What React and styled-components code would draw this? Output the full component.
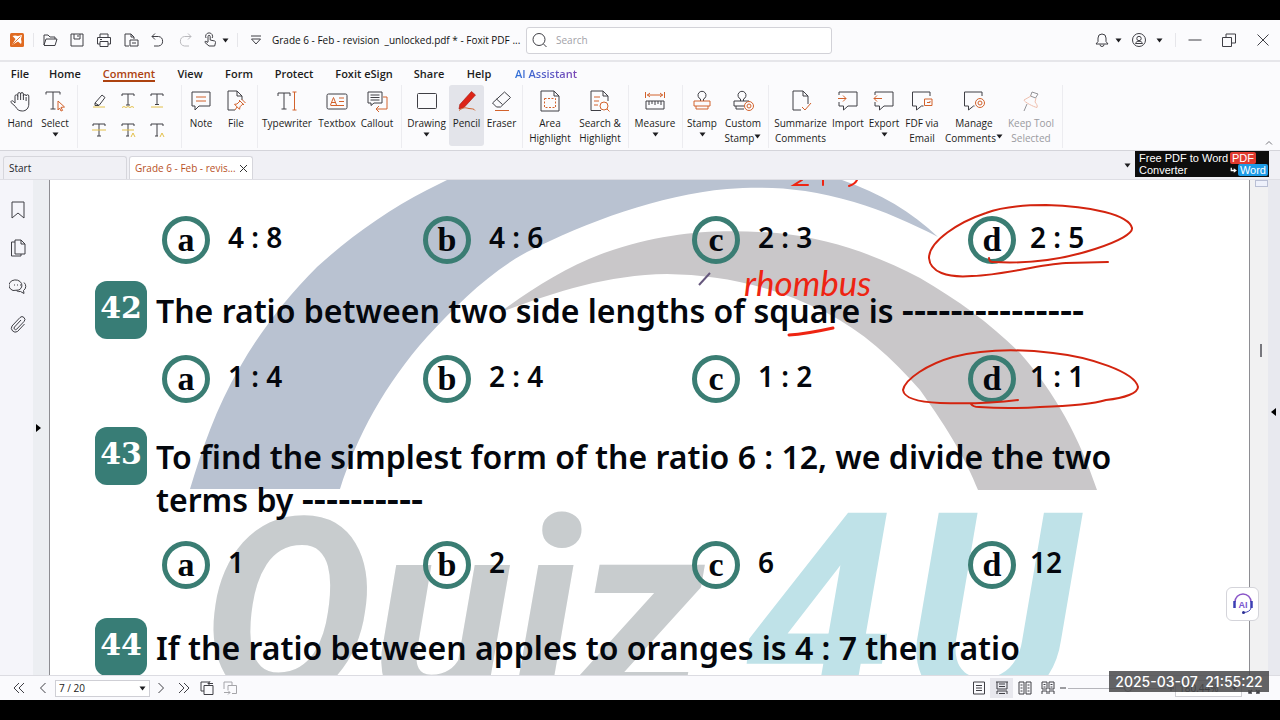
import React, { useState } from "react";
import styled, { createGlobalStyle, css } from "styled-components";

const UI = `"Open Sans", "Noto Sans", sans-serif`;
const INK = "#3f3f45";
const ORANGE = "#d2622c";
const GOLD = "#e3c04a";

const o = { stroke: ORANGE };
const g = { stroke: GOLD };

// ribbon icons, 22 x 22
const icons = {
  hand: (
    <path d="M6 13V6.2a1.4 1.4 0 0 1 2.8 0V4a1.4 1.4 0 0 1 2.8 0v0a1.4 1.4 0 0 1 2.8 0v2a1.4 1.4 0 0 1 2.8 0v0a1.3 1.3 0 0 1 2.6 0V14c0 4-2.5 7-6.5 7-3.6 0-5.2-1.6-6.8-4.4L2 12.5c-.5-1.5 1.2-2.4 2.3-1.2L6 13M8.800 6v4M11.600 4v6M14.400 5v5M17.100 7v4" />
  ),
  select: (
    <>
      <path d="M2 4.500V2h14v2.500M9 2v17M6.500 19h5" />
      <path {...o} d="M14 11l6.500 6-3.500.4 1.600 3-1.600.6-1.400-3L14 20z" />
    </>
  ),
  note: (
    <>
      <path d="M2 2h18v14H9l-4 4v-4H2z" />
      <path {...o} d="M6 7h10M6 11h10" />
    </>
  ),
  file: (
    <>
      <path d="M10 20H3V1h9l5 5v4M12 1v5h5" />
      <path {...o} d="M14 10l5 5M15 11l-3 3-2.500.3 5 5 .5-2.500 3-3M12 17l-2 3M17 9.500l3.500 3.500" />
    </>
  ),
  typewriter: (
    <>
      <path d="M2 6V3h12v3M8 3v16M5.500 19h5" />
      <path {...o} d="M16.500 2h4M18.500 2v18M16.500 20h4" />
    </>
  ),
  textbox: (
    <>
      <rect x="1" y="4" width="20" height="15" rx="1.5" />
      <path {...o} d="M4.500 15l3-7.500 3 7.500M5.500 12.500h4M13 8h5M13 11.500h5M4.500 15.500h13.500" />
    </>
  ),
  callout: (
    <>
      <path d="M2 2h14v11H8l-3 2.500V13H2zM4.500 5h9M4.500 7.500h9M4.500 10h9" />
      <path {...o} d="M17 7h4v12H10M13 16l-3 3 3 3" />
    </>
  ),
  drawing: <rect x="1.5" y="3.500" width="19" height="15" rx="1" />,
  pencil: (
    <>
      <path fill="#dd2417" stroke="#a3160d" strokeWidth=".6" d="M15.500 1.500l4 3.500L8 17.500l-5 1.500 .8-4.500z" />
      <path {...o} d="M3 20.500c5-4 7-2.500 10-2s5 0 6 2" />
    </>
  ),
  eraser: (
    <>
      <path d="M13.500 2l6 5.500L9.500 17H5.500l-4-4zM5.500 9l6 5.500" />
      <path {...o} d="M4 20.500h14" />
    </>
  ),
  area: (
    <>
      <path d="M2 1h13l5 5v15H2zM15 1v5h5" />
      <path {...o} strokeDasharray="2 1.500" d="M5.500 8.500h11v9h-11z" />
    </>
  ),
  searchMark: (
    <>
      <path d="M12 20.500H2V1h12l5 5v5M14 1v5h5" />
      <path {...o} d="M5 7h6M5 11h5M5 15h4M18 19l2.500 2.500" />
      <circle {...o} cx="15" cy="16" r="4" />
    </>
  ),
  measure: (
    <>
      <path {...o} d="M1.500 2v6M20.500 2v6M3 5h16M6 3L3.500 5 6 7M16 3l2.500 2L16 7" />
      <path d="M2 11h18v8H2zM5 11v4M8 11v3M11 11v4M14 11v3M17 11v4" />
    </>
  ),
  stamp: (
    <>
      <path d="M9.500 11V9a4 4 0 1 1 3 0v2" />
      <path {...o} d="M3 11h16v5H3zM5 16v3h12v-3" />
    </>
  ),
  customStamp: (
    <>
      <path d="M8.500 11V9a4 4 0 1 1 3 0v2M12 16H2v-5h15M4 16v3h8" />
      <circle {...o} cx="17" cy="16" r="4.500" />
      <circle {...o} cx="17" cy="16" r="2" />
    </>
  ),
  summarize: (
    <>
      <path d="M11 20H3V1h10l5 5v8M13 1v5h5" />
      <path {...o} d="M12 17l3 3 6-7" />
    </>
  ),
  import: (
    <>
      <path d="M2 5V2h18v14H11l-4.500 4v-4H2v-4" />
      <path {...o} d="M1 8.500h8M6 5.500l3 3-3 3" />
    </>
  ),
  export: (
    <>
      <path d="M2 5V2h18v14H11l-4.500 4v-4H2v-4" />
      <path {...o} d="M9 8.500H1M4 5.500l-3 3 3 3" />
    </>
  ),
  fdf: (
    <>
      <path d="M19 6V2H1.500v14h4v4l5-4h2" />
      <path {...o} d="M13.500 9h7.500v6.500h-7.500zM16 12.500h3v-1.500" />
    </>
  ),
  manage: (
    <>
      <path d="M19 6V2H1.500v14h4v4l5-4h1" />
      <circle {...o} cx="17" cy="13" r="4.500" />
      <circle {...o} cx="17" cy="13" r="2" />
    </>
  ),
  pin: (
    <>
      <path d="M12 2l6 2-2.500 4-5-2zM7 14l-3 7" />
      <path stroke="#e58d6c" d="M11 6L4 10c0 2 10 7 13 7.500 1-2-1-4-2-5.500l1-4" />
    </>
  ),
};

const marks = [
  ["Highlight", <><path d="M4 11l7-8 3 2.500-6 8H4zM4 11l4 2.500" /><path {...g} d="M2 15h12" /></>],
  ["Squiggly underline", <><path d="M2 4V2h12v2M8 2v11M6 13h4" /><path {...g} d="M2 15.500l2-1 2 1 2-1 2 1 2-1 2 1" /></>],
  ["Underline", <><path d="M2 4V2h12v2M8 2v10M6 12.500h4" /><path {...g} d="M2 15h12" /></>],
  ["Strikeout", <><path d="M2 4V2h12v2M8 2v12M6 14h4" /><path {...g} d="M1 8h14" /></>],
  ["Replace text", <><path d="M2 4V2h12v2M8 2v12M6 14h3" /><path {...g} d="M2 8h12M11 15l2-4 2 4" /></>],
  ["Insert text", <><path d="M2 4V2h12v2M8 2v12M6 14h3" /><path {...g} d="M11 15l2-4 2 4" /></>],
];

const menu = [
  ["File", 40],
  ["Home", 50],
  ["Comment", 78],
  ["View", 44],
  ["Form", 54],
  ["Protect", 56],
  ["Foxit eSign", 84],
  ["Share", 46],
  ["Help", 54],
  ["AI Assistant", 80],
];

const ribbon = [
  { pad: 0, tools: [["note", 38, "Note"], ["file", 32, "File"]], end: 5 },
  { pad: 0, tools: [["typewriter", 58, "Typewriter"], ["textbox", 42, "Textbox"], ["callout", 38, "Callout"]], end: 5 },
  { pad: 2, tools: [["drawing", 45, "Drawing", "", "below"], ["pencil", 35, "Pencil"], ["eraser", 35, "Eraser"]], end: 3 },
  { pad: 2, tools: [["area", 50, "Area", "Highlight"], ["searchMark", 50, "Search &", "Highlight"]], end: 3 },
  { pad: 1, tools: [["measure", 50, "Measure", "", "below"]], end: 2 },
  { pad: 1, tools: [["stamp", 36, "Stamp", "", "below"], ["customStamp", 46, "Custom", "Stamp", "inline"]], end: 2 },
  {
    pad: 4,
    tools: [
      ["summarize", 55, "Summarize", "Comments"],
      ["import", 40, "Import"],
      ["export", 32, "Export", "", "below"],
      ["fdf", 44, "FDF via", "Email"],
      ["manage", 60, "Manage", "Comments", "inline"],
      ["pin", 54, "Keep Tool", "Selected"],
    ],
    end: 4,
  },
];

const Glyph = ({ size = 22, children }) => (
  <Svg width={size} height={size} viewBox={`0 0 ${size} ${size}`} aria-hidden="true">
    {children}
  </Svg>
);

const Caret = () => (
  <CaretSvg width="7" height="5" viewBox="0 0 7 5" aria-hidden="true">
    <path d="M.5.5h6L3.500 4.500z" />
  </CaretSvg>
);

function RibbonTool({ tool, active, onPick }) {
  const [name, w, first, second, caret] = tool;
  return (
    <ToolButton type="button" $w={w} $active={active} disabled={name === "pin"} onClick={() => onPick(name)}>
      <Glyph>{icons[name]}</Glyph>
      <span>{first}</span>
      {second && (
        <span>
          {second}
          {caret === "inline" && <Caret />}
        </span>
      )}
      {caret === "below" && <Caret />}
    </ToolButton>
  );
}

function Options({ gap, values }) {
  return (
    <OptionRow $gap={gap}>
      {values.map((value, i) => (
        <Option key={i}>
          <Letter>{"abcd"[i]}</Letter>
          <Answer>{value}</Answer>
        </Option>
      ))}
    </OptionRow>
  );
}

function Question({ gap, no, children }) {
  return (
    <QuestionRow $gap={gap}>
      <Badge>{no}</Badge>
      <QuestionText>{children}</QuestionText>
    </QuestionRow>
  );
}

function Watermark() {
  return (
    <Layer viewBox="50 180 1200 495" aria-hidden="true">
      <path
        fill="#b9c2d1"
        d="M190 489C202 449 216 408 240 367C261 330 288 296 317 267C350 237 388 210 427 190L447 180H842C880 193 912 212 938 237C911 223 884 211 854 202C804 187 765 186 727 189C659 195 587 222 527 252C490 272 457 304 427 337C385 384 357 436 340 489Z"
      />
      <path
        fill="#c9c7c9"
        d="M499 313C533 288 566 267 604 253C670 230 720 229 777 233C830 238 878 256 920 278C958 300 992 325 1020 353C1056 394 1079 437 1097 490H978C966 460 950 432 920 390C892 358 862 331 827 313C772 285 720 275 667 274C604 275 549 294 499 313Z"
      />
      <Mark x="202" y="700" $size={256} fill="#c8ccce">Quiz</Mark>
      <Mark x="744" y="706" $size={272} fill="#bfe2e8">4</Mark>
      <Mark x="904" y="706" $size={272} fill="#bfe2e8">U</Mark>
    </Layer>
  );
}

function InkStrokes() {
  return (
    <Layer viewBox="50 180 1200 495" aria-hidden="true">
      <g fill="none" stroke="#d3240f" strokeWidth="2" strokeLinecap="round">
        <path d="M989 258Q989 262 993 262C1030 264 1062 260 1095 249C1120 241 1133 233 1132 228C1129 215 1091 206 1046 205C1017 205 999 208 986 213C959 222 929 241 929 258C930 272 947 278 972 276C1005 275 1035 265 1066 263L1108 262" />
        <path d="M971 404Q973 407 979 407C1007 409 1025 408 1040 407C1070 406 1093 404 1106 400C1125 398 1138 393 1138 387C1135 372 1090 357 1053 353C1020 349 984 349 953 357C928 364 905 379 903 390C904 398 917 402 940 403C970 404 994 403 1018 400" />
        <path strokeWidth="3" stroke="#ee2412" d="M789 335Q806 334 833 328" />
        <path stroke="#ee2412" d="M802 180L794 185H808M823 180V185M857 180Q855 184 849 186" />
      </g>
      <path d="M699 285L710 273" stroke="#65577c" strokeWidth="2" />
    </Layer>
  );
}

export default function App() {
  const [tool, setTool] = useState("pencil");

  return (
    <Screen>
      <Global />
      <TitleBar>
        <LogoSlot>
          <svg width="14" height="14" viewBox="0 0 14 14" aria-hidden="true">
            <rect width="14" height="14" rx="1.500" fill="#e06b22" />
            <path fill="#fff" d="M2.500 3Q5 1.800 8 3L12 2 11 6Q12 9 11 11L8 8.500 2 12 5.500 6z" />
            <path stroke="#e06b22" strokeWidth=".9" d="M2.500 11.500L10.500 3.500" />
          </svg>
        </LogoSlot>
        <Rule />
        <IconButton aria-label="Open"><Glyph size={16}><path d="M2 13V3h4l2 2h5v2M2 13L4 7h11l-2 6.500H2" /></Glyph></IconButton>
        <IconButton aria-label="Save"><Glyph size={16}><path d="M2 2h12v12H2zM5 2v5h6V2M9 3v2" /></Glyph></IconButton>
        <IconButton aria-label="Print"><Glyph size={16}><path d="M4 5V2h8v3M4 12H1.500V5.500h13V12H12M4 9.500h8v5H4zM4 7.500h2" /></Glyph></IconButton>
        <IconButton aria-label="Convert"><Glyph size={16}><path d="M6 14H2V2h6l3 3v2M8 2v3h3M7 8h8v6H7zM9 11h4" /></Glyph></IconButton>
        <IconButton aria-label="Undo"><Glyph size={16}><path d="M5 1.500L2 4.500l3 3M2 4.500h6.500a4.800 4.800 0 0 1 0 9.500H4" /></Glyph></IconButton>
        <IconButton aria-label="Redo" disabled><Glyph size={16}><path d="M11 1.500l3 3-3 3M14 4.500H7.500a4.800 4.800 0 0 0 0 9.500H12" /></Glyph></IconButton>
        <IconButton aria-label="Touch mode" $w={24}><Glyph size={16}><path d="M6 10V4.500a1 1 0 0 1 2.200 0V8l4.500 1q1 .3.800 1.500l-.8 3.500H7L3 10.500q-.5-1.200.8-1.200L6 10.500M4 6a3.500 3.500 0 1 1 6.200 0" /></Glyph></IconButton>
        <Caret />
        <Rule $gap={8} />
        <IconButton aria-label="Customize toolbar" $w={32}><Glyph size={16}><path d="M3 4h10M3.500 7l4.500 5 4.500-5z" /></Glyph></IconButton>
        <DocTitle>Grade 6 - Feb - revision&nbsp; _unlocked.pdf * - Foxit PDF ...</DocTitle>
        <SearchBox>
          <Glyph size={16}><circle cx="7" cy="7.500" r="6" /><path d="M11.500 12l3 3" /></Glyph>
          <input type="text" placeholder="Search" aria-label="Search" />
        </SearchBox>
        <WindowTools>
          <IconButton aria-label="Notifications"><Glyph size={16}><path d="M2 12h12l-2-2.500V6a4 4 0 0 0-8 0v3.500zM6 12.500a2 2 0 0 0 4 0" /></Glyph></IconButton>
          <Caret />
          <IconButton aria-label="Account" $w={34}><Glyph size={16}><circle cx="8" cy="8" r="6.500" /><circle cx="8" cy="6.500" r="2.200" /><path d="M4.500 11.500c.5-3 6.500-3 7 0z" /></Glyph></IconButton>
          <Caret />
          <Rule $gap={12} />
          <IconButton aria-label="Minimize" $w={34}><Glyph size={16}><path d="M1.500 8h13" /></Glyph></IconButton>
          <IconButton aria-label="Restore" $w={34}><Glyph size={16}><path d="M1.500 5.500h9v9h-9zM5 5.500v-3.500h9.500v9h-4" /></Glyph></IconButton>
          <IconButton aria-label="Close" $w={34}><Glyph size={16}><path d="M2.500 2.500l11 11M13.500 2.500l-11 11" /></Glyph></IconButton>
        </WindowTools>
      </TitleBar>

      <MenuBar>
        {menu.map(([label, w]) => (
          <MenuItem key={label} type="button" $w={w} $active={label === "Comment"} $ai={label === "AI Assistant"}>
            <span>{label}</span>
          </MenuItem>
        ))}
      </MenuBar>

      <Ribbon>
        <Group $end={7}>
          <RibbonTool tool={["hand", 40, "Hand"]} onPick={setTool} />
          <RibbonTool tool={["select", 30, "Select", "", "below"]} onPick={setTool} />
        </Group>
        <Group $pad={6} $end={10}>
          <MarkGrid>
            {marks.map(([label, shape]) => (
              <MarkButton key={label} type="button" aria-label={label}>
                <Glyph size={16}>{shape}</Glyph>
              </MarkButton>
            ))}
          </MarkGrid>
        </Group>
        {ribbon.map((group, i) => (
          <Group key={i} $pad={group.pad} $end={group.end}>
            {group.tools.map((t) => (
              <RibbonTool key={t[0]} tool={t} active={tool === t[0]} onPick={setTool} />
            ))}
          </Group>
        ))}
        <Collapse type="button" aria-label="Collapse ribbon">
          <svg width="8" height="5" viewBox="0 0 8 5" aria-hidden="true">
            <path d="M1 4.500l3-3 3 3" fill="none" stroke="#77777d" />
          </svg>
        </Collapse>
      </Ribbon>

      <DocTabs>
        <DocTab type="button">Start</DocTab>
        <DocTab type="button" $active>
          Grade 6 - Feb - revis...
          <svg width="9" height="9" viewBox="0 0 9 9" aria-hidden="true">
            <path d="M1 1l7 7M8 1L1 8" stroke="#333" />
          </svg>
        </DocTab>
        <TabsEnd>
          <Caret />
          <Promo href="#convert">
            <span>Free PDF to Word</span>
            <PromoTag $bg="#e03a2f">PDF</PromoTag>
            <span>Converter</span>
            <PromoWord>
              <svg width="11" height="9" viewBox="0 0 11 9" aria-hidden="true">
                <path d="M2 0v4.500h5" fill="none" stroke="#fff" strokeWidth="2" />
                <path d="M6 1l5 3.500-5 3.500z" fill="#fff" />
              </svg>
              <PromoTag $bg="#1d9be6">Word</PromoTag>
            </PromoWord>
          </Promo>
        </TabsEnd>
      </DocTabs>

      <Workspace>
        <SideBar>
          <SideButton aria-label="Bookmarks"><Glyph size={18}><path d="M3 1h12v16l-6-5-6 5z" /></Glyph></SideButton>
          <SideButton aria-label="Pages"><Glyph size={18}><path d="M6 1h6l4 4v10H6zM12 1v4h4M6 3H2.500v14H12v-2" /></Glyph></SideButton>
          <SideButton aria-label="Comments"><Glyph size={18}><path d="M4 13.500A6.500 5.500 0 1 1 10 13l-6 .5zM15 5.500a5 5 0 0 1-.5 8l.5 3-3.500-2q-2 .5-4-.8M5 8h1M8 8h1M11 8h1" /></Glyph></SideButton>
          <SideButton aria-label="Attachments"><Glyph size={18}><path d="M12 5l-6.500 7a1.500 1.500 0 0 0 2.200 2.200L15 6.500a2.800 2.800 0 0 0-4-4L3 11a4 4 0 0 0 5.500 5.500L15.500 9" /></Glyph></SideButton>
        </SideBar>
        <Gutter $w={16} $bg="#eceef2">
          <svg width="5" height="8" viewBox="0 0 5 8" aria-hidden="true"><path d="M0 0l5 4-5 4z" /></svg>
        </Gutter>
        <Page>
          <Watermark />
          <Sheet>
            <Options gap={36} values={["4 : 8", "4 : 6", "2 : 3", "2 : 5"]} />
            <Question gap={17} no="42">
              The ratio between two side lengths of square is <Blank>---------------</Blank>
            </Question>
            <Options gap={16} values={["1 : 4", "2 : 4", "1 : 2", "1 : 1"]} />
            <Question gap={24} no="43">
              To find the simplest form of the ratio 6 : 12, we divide the two
              <br />
              terms by <Blank>----------</Blank>
            </Question>
            <Options gap={20} values={["1", "2", "6", "12"]} />
            <Question gap={29} no="44">If the ratio between apples to oranges is 4 : 7 then ratio</Question>
          </Sheet>
          <InkStrokes />
          <InkNote>rhombus</InkNote>
        </Page>
        <ScrollTrack>
          <ScrollKnob />
          <ScrollTick />
        </ScrollTrack>
        <Gutter $w={12} $bg="#e8e9ef" $lift={32}>
          <svg width="5" height="8" viewBox="0 0 5 8" aria-hidden="true"><path d="M5 0L0 4l5 4z" /></svg>
        </Gutter>
        <AiButton type="button" aria-label="AI help">
          <svg width="22" height="22" viewBox="0 0 22 22" aria-hidden="true">
            <path d="M3 9a8 8 0 0 1 16 0" fill="none" stroke="#8a55c8" strokeWidth="1.500" />
            <path d="M2.500 8v7M19.500 8v7" stroke="#3c3fb4" strokeWidth="2.500" />
            <path d="M19 15q-1 4-7 4.500" fill="none" stroke="#3c3fb4" />
            <circle cx="11.500" cy="19.500" r="1.500" fill="#2c2f94" />
            <text x="11" y="15" textAnchor="middle" fontFamily="Liberation Sans, sans-serif" fontWeight="700" fontSize="9" fill="#7a57cf">AI</text>
          </svg>
        </AiButton>
      </Workspace>

      <StatusBar>
        <StatusButton aria-label="First page" $w={24}><Glyph size={12}><path d="M6 1L1 6l5 5M11 1L6 6l5 5" /></Glyph></StatusButton>
        <StatusButton aria-label="Previous page" $w={24}><Glyph size={12}><path d="M8.500 1l-5 5 5 5" /></Glyph></StatusButton>
        <SelectWrap $w={95}>
          <select aria-label="Page" defaultValue="7"><option value="7">7 / 20</option></select>
          <Caret />
        </SelectWrap>
        <StatusButton aria-label="Next page" $w={22}><Glyph size={12}><path d="M3.500 1l5 5-5 5" /></Glyph></StatusButton>
        <StatusButton aria-label="Last page" $w={23}><Glyph size={12}><path d="M1 1l5 5-5 5M6 1l5 5-5 5" /></Glyph></StatusButton>
        <StatusButton aria-label="Previous view" $w={23}><Glyph size={14}><path d="M4 10H1V1h9M4 4.500h9V13.500H4zM13 2.500H8M10 .5l-2 2 2 2" /></Glyph></StatusButton>
        <StatusButton aria-label="Next view" disabled $w={23}><Glyph size={14}><path d="M1 8V1h8v3M5 9V4.500h8.500V12.500H9M1 11.500h6M5 9.500l2 2-2 2" /></Glyph></StatusButton>
        <ViewTools>
          <StatusButton aria-label="Single page" $w={23}><Glyph size={14}><path d="M1.500 1h11v12h-11zM4 4.500h6M4 7h6M4 9.500h6" /></Glyph></StatusButton>
          <StatusButton aria-label="Continuous" $w={23} $active><Glyph size={14}><path d="M2 1v7h10V1M4 3h6M4 5.500h6M2 13v-3h10v3M1 1h12M4 12.500h6" /></Glyph></StatusButton>
          <StatusButton aria-label="Facing" $w={23}><Glyph size={14}><path d="M1 1h5v12H1zM8 1h5v12H8zM2.500 4h2M2.500 7h2M2.500 10h2M9.500 4h2M9.500 7h2M9.500 10h2" /></Glyph></StatusButton>
          <StatusButton aria-label="Continuous facing" $w={23}><Glyph size={14}><path d="M1 1h5v7H1zM8 1h5v7H8zM2.500 3.500h2M2.500 6h2M9.500 3.500h2M9.500 6h2M1 13v-3h5v3M8 13v-3h5v3" /></Glyph></StatusButton>
          <StatusButton aria-label="Zoom out" $w={8}><Glyph size={8}><path d="M1 4h6" /></Glyph></StatusButton>
          <Zoom type="range" min="0" max="100" defaultValue="62" aria-label="Zoom" />
          <StatusButton aria-label="Zoom in" $w={8}><Glyph size={8}><path d="M1 4h6M4 1v6" /></Glyph></StatusButton>
          <SelectWrap $w={67}>
            <select aria-label="Zoom level" defaultValue="z"><option value="z">180.44%</option></select>
            <Caret />
          </SelectWrap>
          <StatusButton aria-label="Full screen" $w={24}><Glyph size={14}><path strokeWidth="1.500" d="M5 9l-3 3M2 9v3h3M9 9l3 3M12 9v3H9M5 5L2 2M9 5l3-3" /></Glyph></StatusButton>
        </ViewTools>
        <Timestamp>2025-03-07&nbsp; 21:55:22</Timestamp>
      </StatusBar>
    </Screen>
  );
}

const Global = createGlobalStyle`
  * { box-sizing: border-box; }
  body { margin: 0; background: #000; }
  button, input, select { font: inherit; color: inherit; padding: 0; margin: 0; }
  button { border: 0; background: none; }
`;

const Screen = styled.div`
  display: flex;
  flex-direction: column;
  height: 100vh;
  padding: 20px 0;
  overflow: hidden;
  background: #000;
  font-family: ${UI};
  font-size: 10px;
  line-height: 15px;
  color: #1c1c20;
`;

const Svg = styled.svg`
  flex: none;
  fill: none;
  stroke: ${INK};
  stroke-width: 1;
`;

const CaretSvg = styled.svg`
  flex: none;
  fill: #1d1d20;
`;

const TitleBar = styled.header`
  flex: none;
  display: flex;
  align-items: center;
  height: 42px;
  background: #fbfbfd;
  border-bottom: 2px solid #e6e6ea;
`;

const LogoSlot = styled.div`
  display: flex;
  justify-content: center;
  width: 33px;
`;

const Rule = styled.div`
  flex: none;
  width: 1px;
  height: 14px;
  margin: 0 2px 0 ${(p) => p.$gap || 0}px;
  background: #e6e6ea;
`;

const IconButton = styled.button.attrs({ type: "button" })`
  flex: none;
  display: flex;
  align-items: center;
  justify-content: center;
  width: ${(p) => p.$w || 27}px;
  height: 27px;
  &:disabled {
    opacity: 0.35;
  }
`;

const DocTitle = styled.div`
  flex: none;
  width: 254px;
  white-space: nowrap;
  font-weight: 500;
  color: #111;
`;

const SearchBox = styled.label`
  flex: 0 1 306px;
  display: flex;
  align-items: center;
  gap: 8px;
  height: 27px;
  padding: 0 5px;
  border: 1px solid #d2d2d8;
  border-radius: 3px;
  background: #fff;
  input {
    flex: 1;
    min-width: 0;
    border: 0;
    outline: 0;
    background: none;
  }
  input::placeholder {
    color: #a2a2a8;
  }
`;

const WindowTools = styled.div`
  display: flex;
  align-items: center;
  margin-left: auto;
`;

const MenuBar = styled.nav`
  flex: none;
  display: flex;
  height: 23px;
  background: #fbfbfd;
`;

const MenuItem = styled.button`
  display: flex;
  align-items: flex-start;
  justify-content: center;
  width: ${(p) => p.$w}px;
  white-space: nowrap;
  font-size: 11px;
  font-weight: 600;
  span {
    height: 20px;
    padding-top: 4px;
  }
  ${(p) =>
    p.$active &&
    css`
      color: #ad4210;
      span {
        border-bottom: 2px solid #ad4210;
      }
    `}
  ${(p) =>
    p.$ai &&
    css`
      span {
        background: linear-gradient(90deg, #2f71d8, #7b45b5);
        background-clip: text;
        color: transparent;
      }
    `}
`;

const Ribbon = styled.div`
  flex: none;
  display: flex;
  height: 66px;
  background: #fbfbfd;
  border-bottom: 1px solid #d4d4da;
`;

const Group = styled.div`
  flex: none;
  display: flex;
  height: 63px;
  padding-left: ${(p) => p.$pad || 0}px;
  padding-right: ${(p) => p.$end}px;
  border-right: 1px solid #ececf0;
`;

const ToolButton = styled.button`
  display: flex;
  flex-direction: column;
  align-items: center;
  width: ${(p) => p.$w}px;
  height: 61px;
  padding-top: 5px;
  border-radius: 3px;
  white-space: nowrap;
  background: ${(p) => (p.$active ? "#e3e4ea" : "none")};
  > svg:first-child {
    margin-bottom: 4px;
  }
  > ${CaretSvg} {
    margin-top: 1px;
  }
  span > ${CaretSvg} {
    vertical-align: 3px;
  }
  &:disabled {
    color: #9a9aa0;
  }
  &:disabled svg {
    opacity: 0.55;
  }
`;

const MarkGrid = styled.div`
  display: grid;
  grid-template-columns: repeat(3, 29px);
  grid-template-rows: 30px 30px;
`;

const MarkButton = styled.button`
  display: flex;
  align-items: center;
  justify-content: center;
`;

const Collapse = styled.button`
  margin-left: auto;
  align-self: flex-end;
  width: 22px;
  height: 18px;
`;

const DocTabs = styled.div`
  flex: none;
  display: flex;
  align-items: flex-end;
  gap: 2px;
  height: 29px;
  padding-left: 3px;
  background: #f0f0f5;
  border-bottom: 1px solid #dedee4;
`;

const DocTab = styled.button`
  display: flex;
  align-items: center;
  justify-content: space-between;
  width: 124px;
  height: 23px;
  padding: 0 4px 0 5px;
  border: 1px solid #d6d6dc;
  border-bottom: 0;
  border-radius: 3px 3px 0 0;
  white-space: nowrap;
  background: ${(p) => (p.$active ? "#fff" : "#f0f0f5")};
  color: ${(p) => (p.$active ? "#b8511f" : "#26262a")};
`;

const TabsEnd = styled.div`
  display: flex;
  align-items: center;
  gap: 4px;
  height: 28px;
  margin: 0 11px 0 auto;
`;

const Promo = styled.a`
  display: grid;
  grid-template-columns: 91px 38px;
  grid-template-rows: 12px 12px;
  align-self: flex-start;
  width: 134px;
  height: 26px;
  padding: 1px 0 0 4px;
  background: #0d0d0d;
  color: #fff;
  font-family: "Liberation Sans", sans-serif;
  font-size: 11px;
  line-height: 12px;
  text-decoration: none;
  white-space: nowrap;
`;

const PromoTag = styled.span`
  justify-self: start;
  padding: 0 2px;
  border-radius: 2px;
  background: ${(p) => p.$bg};
`;

const PromoWord = styled.span`
  display: flex;
  align-items: center;
  justify-content: flex-end;
  gap: 1px;
`;

const Workspace = styled.main`
  position: relative;
  flex: 1;
  min-height: 0;
  display: flex;
  overflow: hidden;
`;

const SideBar = styled.aside`
  flex: none;
  display: flex;
  flex-direction: column;
  align-items: center;
  gap: 20px;
  width: 33px;
  padding-top: 21px;
  padding-left: 2px;
  background: #f5f5fa;
`;

const SideButton = styled.button.attrs({ type: "button" })`
  height: 18px;
  line-height: 0;
`;

const Gutter = styled.div`
  flex: none;
  display: flex;
  align-items: center;
  width: ${(p) => p.$w}px;
  padding-left: 3px;
  padding-bottom: ${(p) => p.$lift || 0}px;
  background: ${(p) => p.$bg};
`;

const Page = styled.section`
  position: relative;
  flex: 1;
  overflow: hidden;
  background: #fff;
  border: 1px solid #8d8d92;
  border-width: 0 1px;
`;

const Sheet = styled.div`
  position: relative;
  font-family: "Noto Sans", sans-serif;
  color: #04070d;
`;

const Layer = styled.svg`
  position: absolute;
  top: 0;
  left: 0;
  width: 1200px;
  height: 495px;
`;

const Mark = styled.text`
  font: italic 700 ${(p) => p.$size}px "Roboto", sans-serif;
`;

const OptionRow = styled.div`
  display: grid;
  grid-template-columns: 261px 269px 276px auto;
  margin-top: ${(p) => p.$gap}px;
  padding-left: 112px;
`;

const Option = styled.div`
  display: flex;
  align-items: center;
  gap: 18px;
  &:last-child {
    gap: 14px;
  }
`;

const Letter = styled.span`
  display: flex;
  align-items: center;
  justify-content: center;
  width: 48px;
  height: 48px;
  border: 5px solid #3a7d73;
  border-radius: 50%;
  font: 700 34px/38px "Liberation Serif", serif;
`;

const Answer = styled.span`
  padding-bottom: 6px;
  font-size: 28px;
  font-weight: 600;
  line-height: 38px;
`;

const QuestionRow = styled.div`
  display: flex;
  gap: 9px;
  margin-top: ${(p) => p.$gap}px;
  padding-left: 45px;
`;

const Badge = styled.div`
  flex: none;
  width: 52px;
  height: 58px;
  border-radius: 12px;
  background: #387d76;
  color: #fff;
  text-align: center;
  font: 700 30px/54px "DejaVu Serif", serif;
`;

const QuestionText = styled.p`
  margin: 0;
  padding-top: 8px;
  white-space: nowrap;
  font-size: 32px;
  font-weight: 600;
  line-height: 43px;
`;

const Blank = styled.span`
  font-size: 38px;
  line-height: 0;
`;

const InkNote = styled.span`
  position: absolute;
  top: 82px;
  left: 694px;
  font: italic 400 35px/40px "Lato", sans-serif;
  color: #ee2412;
`;

const AiButton = styled.button`
  position: absolute;
  right: 21px;
  bottom: 54px;
  width: 33px;
  height: 34px;
  border: 1px solid #d4d4da;
  border-radius: 6px;
  background: #fff;
  line-height: 0;
`;

const ScrollTrack = styled.div`
  flex: none;
  display: flex;
  flex-direction: column;
  align-items: center;
  width: 18px;
  background: #f1f1f2;
`;

const ScrollKnob = styled.div`
  width: 13px;
  height: 7px;
  margin-left: 4px;
  border: 1px solid #b9bfd4;
  background: #eef1fb;
`;

const ScrollTick = styled.div`
  width: 2px;
  height: 13px;
  margin: 157px 0 0 4px;
  background: #77777d;
`;

const StatusBar = styled.footer`
  position: relative;
  flex: none;
  display: flex;
  align-items: center;
  height: 25px;
  padding-left: 7px;
  background: #fafafd;
  border-top: 1px solid #dcdce2;
`;

const StatusButton = styled.button.attrs({ type: "button" })`
  flex: none;
  display: flex;
  align-items: center;
  justify-content: center;
  width: ${(p) => p.$w}px;
  height: 20px;
  background: ${(p) => (p.$active ? "#e8e8ee" : "none")};
  &:disabled {
    opacity: 0.45;
  }
`;

const SelectWrap = styled.div`
  display: flex;
  align-items: center;
  width: ${(p) => p.$w}px;
  height: 17px;
  padding: 0 3px;
  border: 1px solid #cfcfd5;
  background: #fff;
  select {
    flex: 1;
    min-width: 0;
    appearance: none;
    border: 0;
    background: none;
  }
`;

const ViewTools = styled.div`
  display: flex;
  align-items: center;
  margin: 0 14px 0 auto;
`;

const Zoom = styled.input`
  width: 98px;
  height: 12px;
  margin: 0 1px;
  appearance: none;
  background: linear-gradient(#b5b5bb, #b5b5bb) center / 100% 1px no-repeat;
  &::-webkit-slider-thumb {
    appearance: none;
    width: 8px;
    height: 8px;
    border: 1px solid #77777d;
    border-radius: 50%;
    background: #fafafd;
  }
`;

const Timestamp = styled.time`
  position: absolute;
  right: 11px;
  bottom: 8px;
  width: 160px;
  height: 21px;
  background: rgba(72, 72, 74, 0.85);
  color: #fff;
  text-align: center;
  white-space: nowrap;
  font: 500 14px/21px "Inter", sans-serif;
`;
